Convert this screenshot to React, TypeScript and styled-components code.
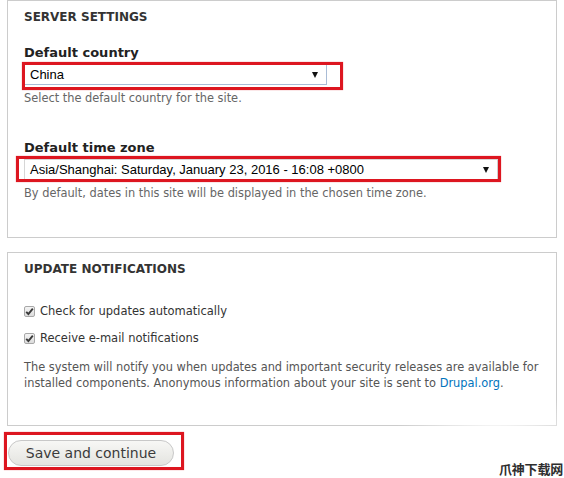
import styled, { createGlobalStyle } from "styled-components";

const GlobalStyle = createGlobalStyle`
  body {
    margin: 0;
    background: #fff;
    font-family: "DejaVu Sans", Verdana, sans-serif;
  }
`;

const App = () => {
  return (
    <>
      <GlobalStyle />
      <Page>
        <Panel $padBottom={37}>
          <Heading>SERVER SETTINGS</Heading>

          <Label $top={20}>Default country</Label>
          <SelectWrap $width={303}>
            <SelectBox $border="#a9bcd6">
              <SelectText>China</SelectText>
              <Arrow />
            </SelectBox>
            <Highlight $inset="-2px -16px -5px -2px" />
          </SelectWrap>
          <Description>Select the default country for the site.</Description>

          <Label $top={35}>Default time zone</Label>
          <SelectWrap $width={474}>
            <SelectBox $border="#cfcfcf">
              <SelectText>Asia/Shanghai: Saturday, January 23, 2016 - 16:08 +0800</SelectText>
              <Arrow />
            </SelectBox>
            <Highlight $inset="-3px -3px -2px -8px" />
          </SelectWrap>
          <Description>By default, dates in this site will be displayed in the chosen time zone.</Description>
        </Panel>

        <Panel $padBottom={34} $gapTop={14}>
          <Heading>UPDATE NOTIFICATIONS</Heading>

          <CheckList>
            <CheckRow>
              <CheckBox>
                <svg width="9" height="9" viewBox="0 0 9 9">
                  <path d="M1.2 4.8 L3.4 7 L7.8 1.6" fill="none" stroke="#3a3a3a" strokeWidth="1.9" />
                </svg>
              </CheckBox>
              <CheckLabel>Check for updates automatically</CheckLabel>
            </CheckRow>
            <CheckRow>
              <CheckBox>
                <svg width="9" height="9" viewBox="0 0 9 9">
                  <path d="M1.2 4.8 L3.4 7 L7.8 1.6" fill="none" stroke="#3a3a3a" strokeWidth="1.9" />
                </svg>
              </CheckBox>
              <CheckLabel>Receive e-mail notifications</CheckLabel>
            </CheckRow>
          </CheckList>

          <Note>
            The system will notify you when updates and important security releases are available for
            installed components. Anonymous information about your site is sent to <Link>Drupal.org</Link>.
          </Note>
        </Panel>

        <ButtonWrap>
          <Button>Save and continue</Button>
          <Highlight $inset="-8px -10px -4px -4px" />
        </ButtonWrap>
      </Page>

      <Fog />
      <Watermark>爪神下载网</Watermark>
    </>
  );
};

export default App;

const Page = styled.div`
  width: 550px;
  padding-left: 7px;
  padding-bottom: 10px;
`;

const Panel = styled.div<{ $padBottom: number; $gapTop?: number }>`
  border: 1px solid #cccccc;
  margin-top: ${(p) => p.$gapTop ?? 0}px;
  padding: 9px 16px ${(p) => p.$padBottom}px 16px;
  display: flex;
  flex-direction: column;
  align-items: flex-start;
`;

const Heading = styled.div`
  font-size: 12px;
  line-height: 15px;
  font-weight: bold;
  color: #333;
`;

const Label = styled.div<{ $top: number }>`
  margin-top: ${(p) => p.$top}px;
  margin-bottom: 3px;
  font-size: 13px;
  line-height: 16px;
  font-weight: bold;
  color: #222;
`;

const SelectWrap = styled.div<{ $width: number }>`
  position: relative;
  width: ${(p) => p.$width}px;
`;

const SelectBox = styled.div<{ $border: string }>`
  height: 21px;
  box-sizing: border-box;
  border: 1px solid ${(p) => p.$border};
  border-top-color: #d6d6d6;
  border-left-color: #d6d6d6;
  background: #fff;
  display: flex;
  align-items: center;
  justify-content: space-between;
  padding: 0 8px 0 5px;
`;

const SelectText = styled.span`
  font-family: "Liberation Sans", Arial, sans-serif;
  font-size: 13px;
  color: #000;
  white-space: nowrap;
`;

const Arrow = styled.span`
  width: 0;
  height: 0;
  border-left: 3.5px solid transparent;
  border-right: 3.5px solid transparent;
  border-top: 6px solid #111;
`;

const Highlight = styled.span<{ $inset: string }>`
  position: absolute;
  inset: ${(p) => p.$inset};
  border: 3px solid #dd1620;
  box-shadow: 0 0 1px rgba(221, 22, 32, 0.6);
  pointer-events: none;
`;

const Description = styled.div`
  margin-top: 6px;
  font-size: 11.4px;
  line-height: 14px;
  color: #666;
`;

const CheckList = styled.div`
  margin-top: 26px;
  display: flex;
  flex-direction: column;
  gap: 11px;
`;

const CheckRow = styled.label`
  display: flex;
  align-items: center;
  gap: 5px;
  height: 16px;
`;

const CheckBox = styled.span`
  width: 11px;
  height: 11px;
  box-sizing: border-box;
  border: 1px solid #a8a8a8;
  border-radius: 2px;
  background: linear-gradient(#f4f4f4, #dcdcdc);
  display: flex;
  align-items: center;
  justify-content: center;
`;

const CheckLabel = styled.span`
  font-size: 11.5px;
  line-height: 16px;
  color: #333;
`;

const Note = styled.p`
  margin: 13px 0 0;
  font-size: 11.4px;
  line-height: 16px;
  color: #555;
`;

const Link = styled.span`
  color: #0074bd;
`;

const ButtonWrap = styled.div`
  position: relative;
  width: 166px;
  margin: 14px 0 0 1px;
`;

const Button = styled.button`
  width: 166px;
  height: 26px;
  border: 1px solid #c8c8c8;
  border-radius: 13px;
  background: linear-gradient(#f7f7f5, #e4e4e0);
  font-family: "DejaVu Sans", Verdana, sans-serif;
  font-size: 14px;
  color: #3b3b3b;
  padding: 0;
`;

const Fog = styled.div`
  position: absolute;
  right: 0;
  top: 390px;
  width: 170px;
  height: 88px;
  background: radial-gradient(ellipse at 60% 50%, rgba(255, 255, 255, 0.95), rgba(255, 255, 255, 0) 70%);
  pointer-events: none;
`;

const Watermark = styled.div`
  position: absolute;
  right: 1px;
  top: 461px;
  font-family: "Noto Sans CJK SC", sans-serif;
  font-size: 13px;
  line-height: 15px;
  font-weight: bold;
  color: #2e2e2e;
  letter-spacing: -0.2px;
`;
